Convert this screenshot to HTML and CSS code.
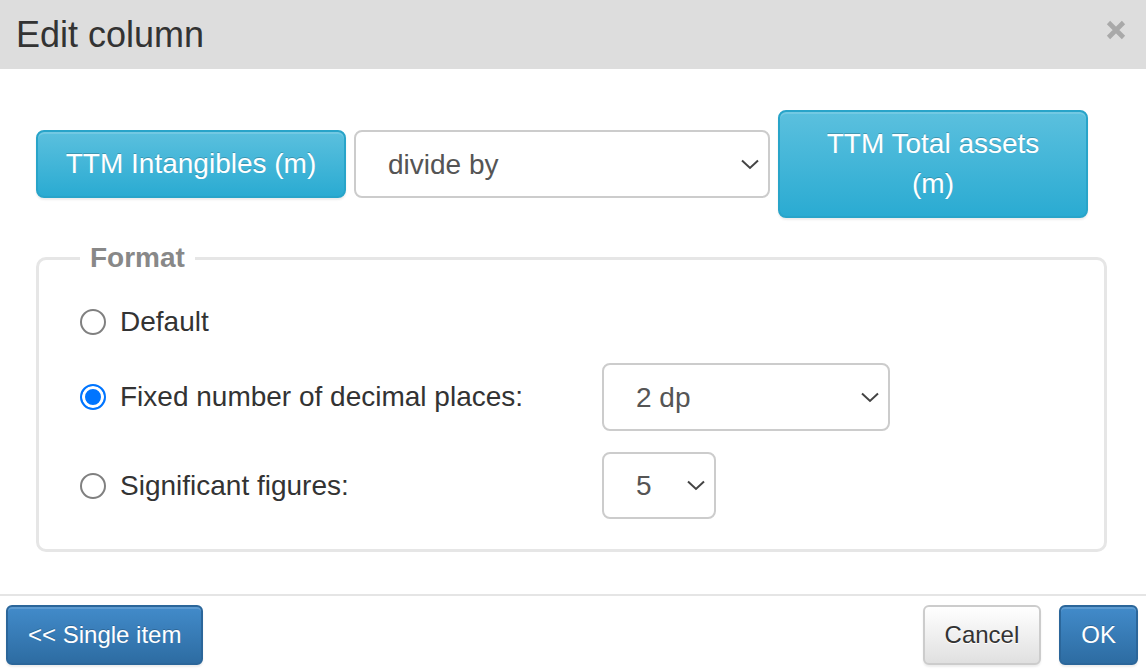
FILE: index.html
```html
<!DOCTYPE html>
<html lang="en">
<head>
    <meta charset="UTF-8">
    <meta name="viewport" content="width=device-width, initial-scale=1.0">
    <title>Edit column</title>
    <link rel="stylesheet" href="styles.css">
</head>
<body>
    <div class="modal">
        <div class="modal-header">
            <h4 class="modal-title">Edit column</h4>
            <button class="close" type="button" aria-label="Close">
                <svg width="20" height="20" viewBox="0 0 20 20">
                    <path d="M2.5 2.5 L17.5 17.5 M17.5 2.5 L2.5 17.5" stroke="#a9a9a9" stroke-width="4.6" fill="none"/>
                </svg>
            </button>
        </div>
        <div class="modal-body">
            <div class="expr-row">
                <button class="btn btn-info expr-btn" type="button">TTM Intangibles (m)</button>
                <select class="form-control op-select">
                    <option>divide by</option>
                    <option>multiply by</option>
                    <option>add</option>
                    <option>subtract</option>
                </select>
                <button class="btn btn-info expr-btn" type="button">TTM Total assets (m)</button>
            </div>

            <fieldset class="format">
                <legend>Format</legend>
                <div class="format-grid">
                    <label class="radio-label"><input type="radio" name="fmt" value="default"> Default</label>
                    <span></span>

                    <label class="radio-label"><input type="radio" name="fmt" value="dp" checked> Fixed number of decimal places:</label>
                    <select class="form-control dp-select">
                        <option>0 dp</option>
                        <option>1 dp</option>
                        <option selected>2 dp</option>
                        <option>3 dp</option>
                    </select>

                    <label class="radio-label"><input type="radio" name="fmt" value="sf"> Significant figures:</label>
                    <select class="form-control sf-select">
                        <option>3</option>
                        <option>4</option>
                        <option selected>5</option>
                        <option>6</option>
                    </select>
                </div>
            </fieldset>
        </div>
        <div class="modal-footer">
            <button class="btn btn-primary btn-sm" type="button">&lt;&lt; Single item</button>
            <div class="footer-right">
                <button class="btn btn-default btn-sm" type="button">Cancel</button>
                <button class="btn btn-primary btn-sm" type="button">OK</button>
            </div>
        </div>
    </div>
</body>
</html>
```

FILE: styles.css
```css
/* modal drawn at 2x of bootstrap 3 sizes */
body {
    margin: 0;
    font-family: 'Liberation Sans', Arial, sans-serif;
    font-size: 28px;
    line-height: 40px;
    color: #333;
    background: #fff;
}
.modal {
    width: 1146px;
    height: 672px;
    overflow: hidden;
}
.modal-header {
    height: 69px;
    padding: 0 20px 0 16px;
    background-color: #dddddd;
    display: flex;
    align-items: center;
    justify-content: space-between;
    box-sizing: border-box;
}
.modal-title {
    margin: 0;
    font-size: 36px;
    font-weight: normal;
    line-height: 40px;
    color: #333;
}
.close {
    border: 0;
    background: none;
    padding: 0;
    width: 20px;
    height: 20px;
    margin-top: -10px;
    cursor: pointer;
}
.close svg {
    display: block;
}
.modal-body {
    padding: 41px 39px 42px 36px;
}
.expr-row {
    display: flex;
    align-items: center;
    gap: 8px;
    margin-bottom: 20px;
}
.btn {
    font-family: inherit;
    font-size: 28px;
    line-height: 40px;
    padding: 12px 24px;
    border: 2px solid transparent;
    border-radius: 8px;
    cursor: pointer;
    text-align: center;
    box-shadow: inset 0 2px 0 rgba(255,255,255,0.15), 0 2px 2px rgba(0,0,0,0.075);
}
.btn-info {
    color: #fff;
    text-shadow: 0 -1px 0 rgba(0,0,0,0.2);
    background-color: #5bc0de;
    background-image: linear-gradient(to bottom, #5bc0de 0, #2aabd2 100%);
    border-color: #28a4c9;
}
.btn-primary {
    color: #fff;
    text-shadow: 0 -1px 0 rgba(0,0,0,0.2);
    background-color: #428bca;
    background-image: linear-gradient(to bottom, #428bca 0, #2d6ca2 100%);
    border-color: #2b669a;
}
.btn-default {
    color: #333;
    text-shadow: 0 1px 0 #fff;
    background-color: #fff;
    background-image: linear-gradient(to bottom, #fff 0, #e0e0e0 100%);
    border-color: #ccc;
}
.btn-sm {
    font-size: 24px;
    line-height: 36px;
    padding: 10px 20px;
    border-radius: 6px;
}
.expr-btn {
    width: 310px;
    flex: none;
}
.form-control {
    font-family: inherit;
    font-size: 28px;
    color: #555;
    height: 68px;
    padding: 0 40px 0 32px;
    border: 2px solid #ccc;
    border-radius: 8px;
    background-color: #fff;
    background-image: url("data:image/svg+xml,%3Csvg xmlns='http://www.w3.org/2000/svg' width='18' height='11' viewBox='0 0 18 11'%3E%3Cpath d='M1 1.5 L9 9 L17 1.5' stroke='%23444' stroke-width='2' fill='none'/%3E%3C/svg%3E");
    background-repeat: no-repeat;
    background-position: right 9px center;
    -webkit-appearance: none;
    appearance: none;
    box-sizing: border-box;
}
.op-select {
    width: 416px;
    flex: none;
}
.format {
    margin: 0;
    min-width: 0;
    padding: 24px 30px 30px 41px;
    border: 3px solid #e6e6e6;
    border-radius: 10px;
}
.format legend {
    padding: 0 10px;
    font-weight: bold;
    color: #888;
    line-height: 40px;
}
.format-grid {
    display: grid;
    grid-template-columns: 522px auto;
    row-gap: 21px;
    align-items: center;
}
.radio-label {
    display: flex;
    align-items: center;
    gap: 14px;
    line-height: 40px;
    color: #333;
}
.radio-label input {
    -webkit-appearance: none;
    appearance: none;
    width: 26px;
    height: 26px;
    margin: 0;
    border: 2px solid #808080;
    border-radius: 50%;
    background: #fff;
    flex: none;
}
.radio-label input:checked {
    border-color: #0075ff;
    background: #0075ff;
    box-shadow: inset 0 0 0 3px #fff;
}
.dp-select {
    width: 288px;
}
.sf-select {
    width: 114px;
    height: 67px;
}
.modal-footer {
    border-top: 2px solid #e5e5e5;
    padding: 9px 8px 8px 6px;
    display: flex;
    justify-content: space-between;
    align-items: center;
}
.footer-right {
    display: flex;
    gap: 18px;
}
```
